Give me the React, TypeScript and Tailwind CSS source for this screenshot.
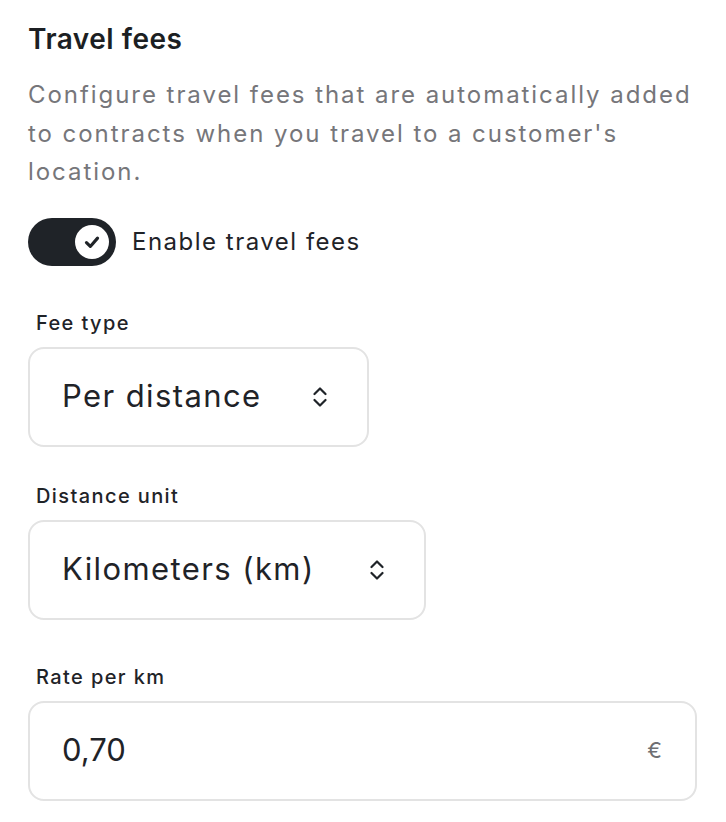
import React from 'react';

const font = { fontFamily: 'Inter, "Noto Sans", sans-serif' };

const UpDown = () => (
  <svg width="14" height="22" viewBox="0 0 14 22" fill="none" stroke="#1f2328" strokeWidth="2.2" strokeLinecap="round" strokeLinejoin="round">
    <path d="M1.5 8 L7 2.5 L12.5 8" />
    <path d="M1.5 14 L7 19.5 L12.5 14" />
  </svg>
);

const Toggle = ({ on }: { on: boolean }) => (
  <button className={`relative w-[88px] h-[48px] rounded-full shrink-0 ${on ? 'bg-[#1f2328]' : 'bg-[#d4d4d4]'}`}>
    <span className="absolute right-[7px] top-[7px] w-[34px] h-[34px] rounded-full bg-white flex items-center justify-center">
      <svg width="20" height="20" viewBox="0 0 18 18" fill="none" stroke="#1f2328" strokeWidth="2.8" strokeLinecap="round" strokeLinejoin="round">
        <path d="M4 9.5 L7.5 13 L14 5.5" />
      </svg>
    </span>
  </button>
);

const Field = ({ label, className, children }: { label: string; className?: string; children: React.ReactNode }) => (
  <div className={className}>
    <label className="block pl-2 text-[20px] leading-[28px] font-medium tracking-[1.4px] text-[#1f2328]">{label}</label>
    {children}
  </div>
);

export default function App() {
  return (
    <div className="min-h-screen bg-white px-7 pt-[21px]" style={font}>
      <h2 className="text-[28px] leading-[36px] font-semibold text-[#1c1f23] tracking-[0.5px]">Travel fees</h2>
      <p className="mt-[19px] text-[24px] leading-[38.5px] text-[#76767a] tracking-[1.95px] whitespace-nowrap">
        Configure travel fees that are automatically added
        <br />
        to contracts when you travel to a customer's
        <br />
        location.
      </p>

      <div className="mt-[26px] flex items-center gap-4">
        <Toggle on />
        <span className="text-[24px] text-[#1f2328] tracking-[1.5px]">Enable travel fees</span>
      </div>

      <Field label="Fee type" className="mt-[43px]">
        <div className="mt-[10px] w-[341px] h-[100px] rounded-2xl border-2 border-[#e3e3e3] pl-8 pr-[40px] flex items-center justify-between">
          <span className="text-[31px] text-[#1f2328] tracking-[1.4px]">Per distance</span>
          <UpDown />
        </div>
      </Field>

      <Field label="Distance unit" className="mt-[35px]">
        <div className="mt-[10px] w-[398px] h-[100px] rounded-2xl border-2 border-[#e3e3e3] pl-8 pr-[40px] flex items-center justify-between">
          <span className="text-[31px] text-[#1f2328] tracking-[1.4px]">Kilometers (km)</span>
          <UpDown />
        </div>
      </Field>

      <Field label="Rate per km" className="mt-[43px]">
        <div className="mt-[10px] w-[669px] h-[100px] rounded-2xl border-2 border-[#e3e3e3] pl-8 pr-[36px] flex items-center justify-between">
          <span className="text-[31px] text-[#1f2328]">0,70</span>
          <span className="text-[22px] text-[#6f6f73] mr-[-3px]">€</span>
        </div>
      </Field>
    </div>
  );
}
